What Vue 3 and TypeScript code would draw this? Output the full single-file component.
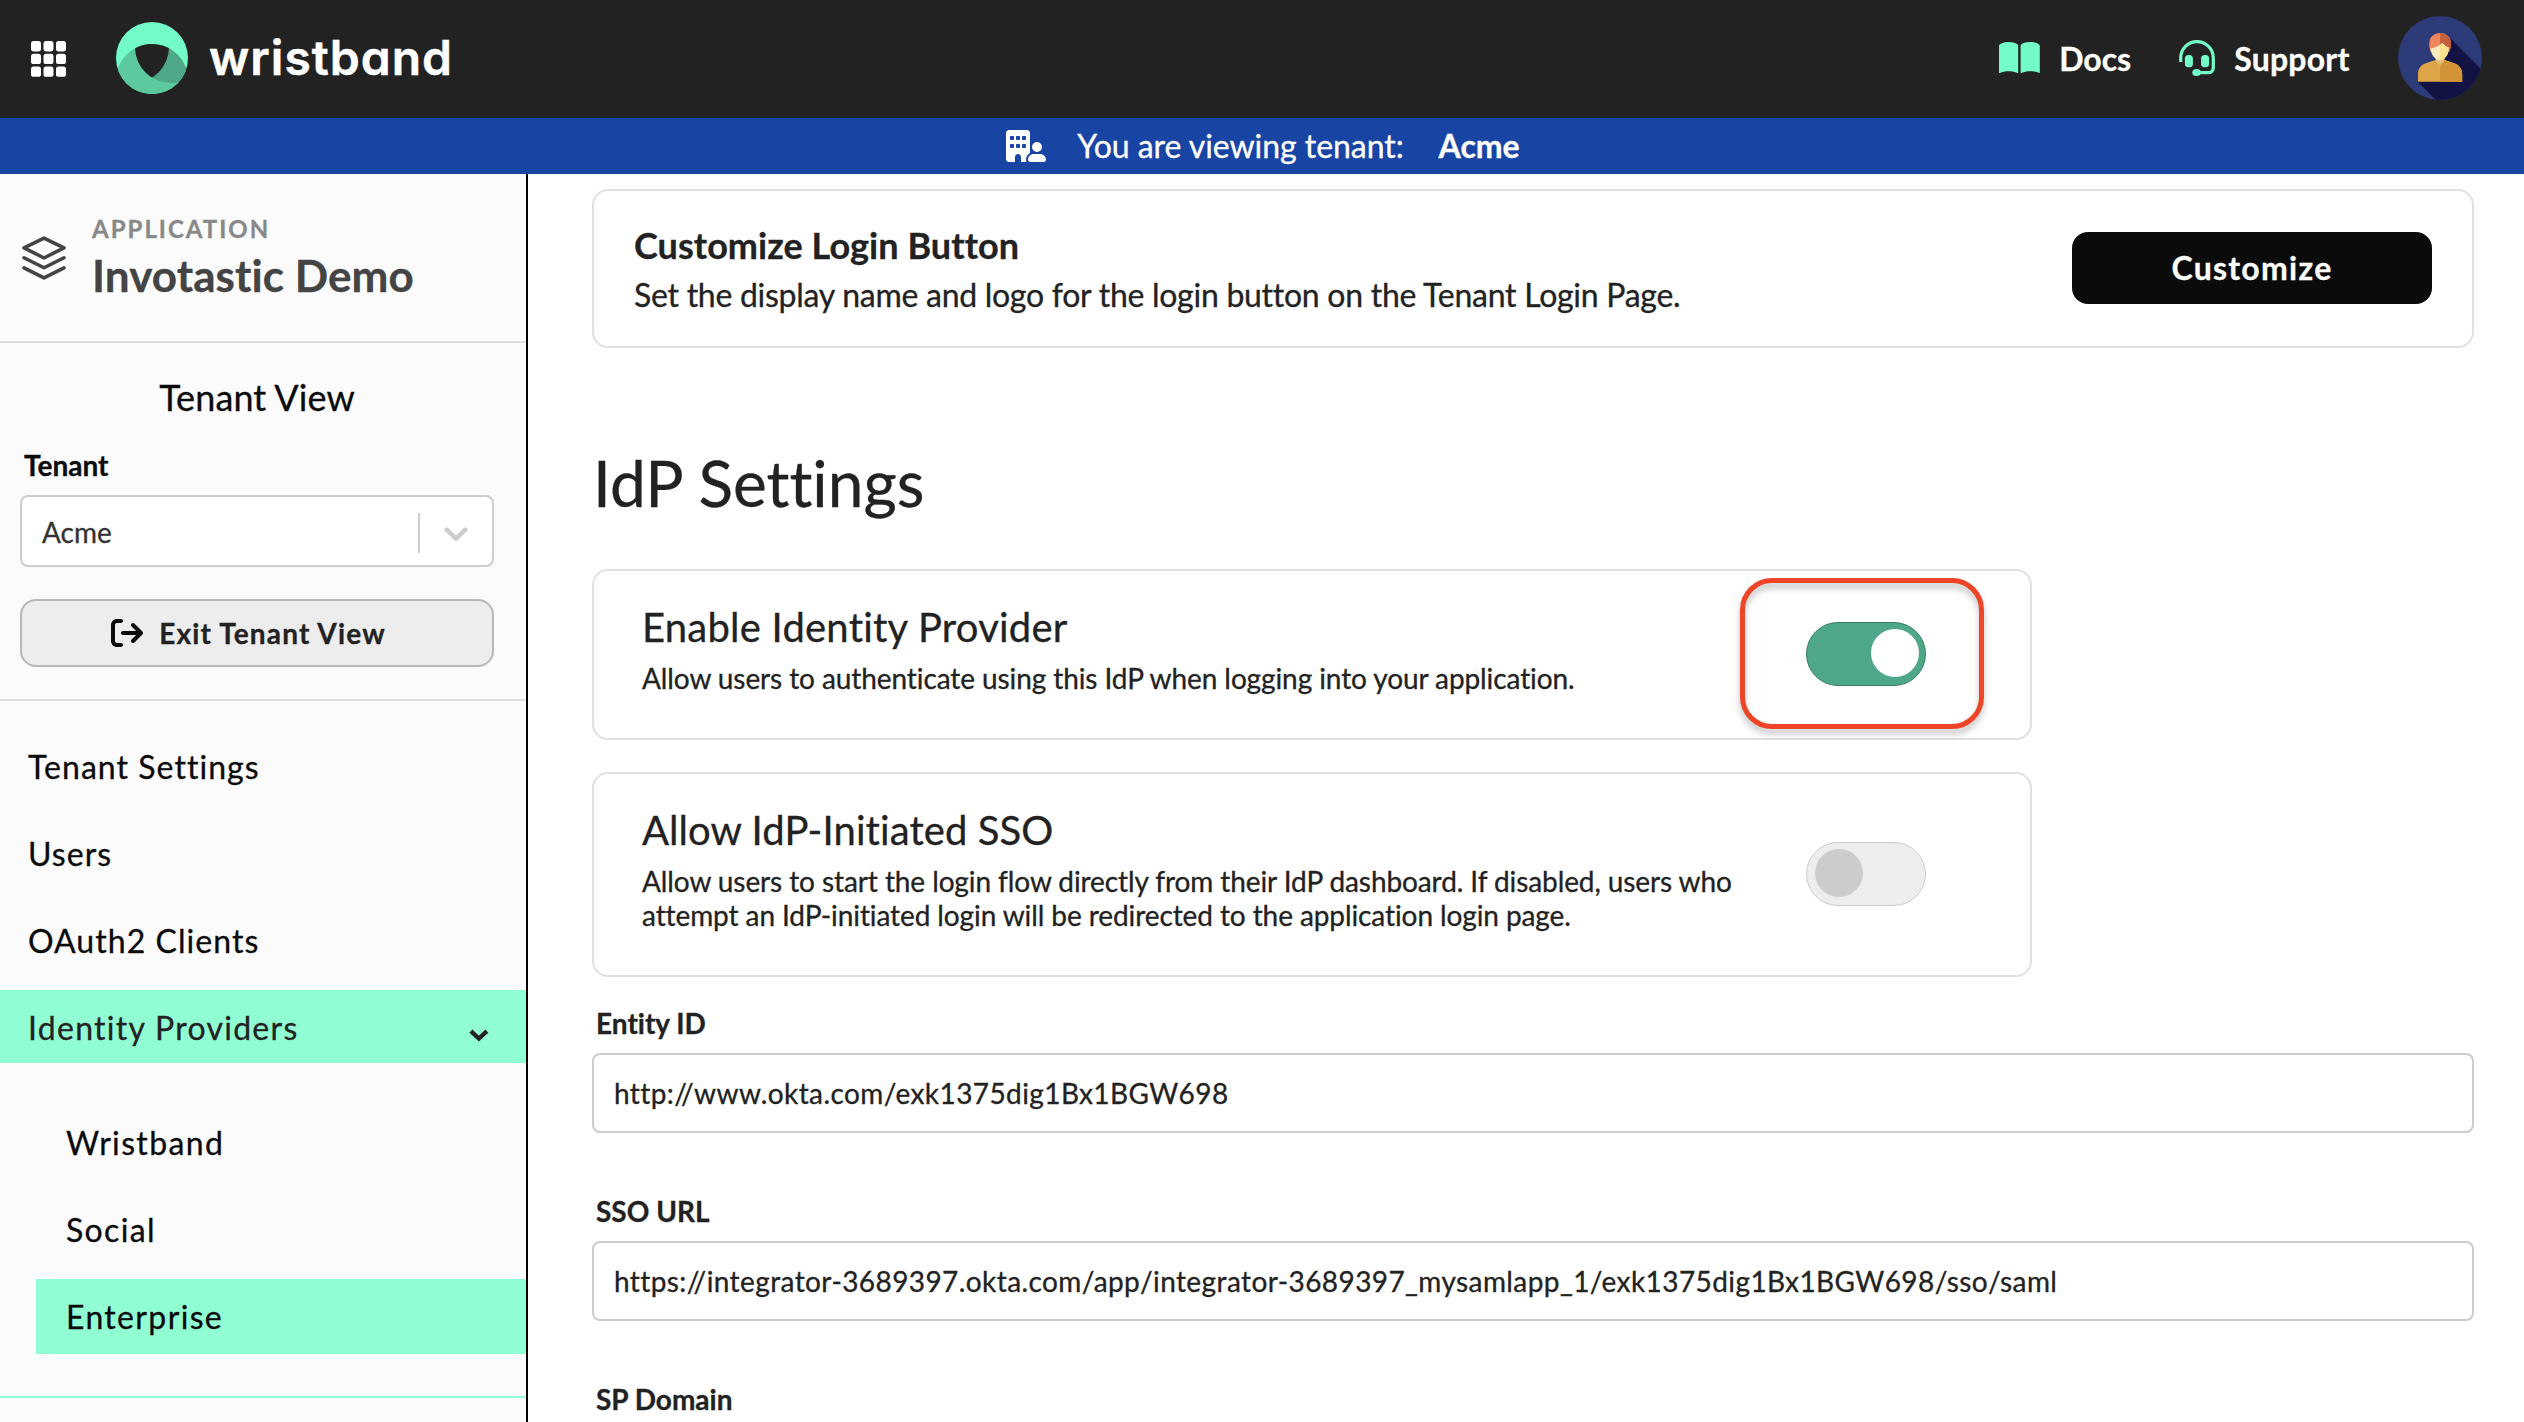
<script setup lang="ts">
import { ref } from 'vue'

interface NavItem { label: string; active?: boolean }
interface Field { label: string; value?: string }

const navItems: NavItem[] = [
  { label: 'Tenant Settings' },
  { label: 'Users' },
  { label: 'OAuth2 Clients' },
  { label: 'Identity Providers', active: true },
]
const subItems: NavItem[] = [
  { label: 'Wristband' },
  { label: 'Social' },
  { label: 'Enterprise', active: true },
]
const fields: Field[] = [
  { label: 'Entity ID', value: 'http://www.okta.com/exk1375dig1Bx1BGW698' },
  { label: 'SSO URL', value: 'https://integrator-3689397.okta.com/app/integrator-3689397_mysamlapp_1/exk1375dig1Bx1BGW698/sso/saml' },
  { label: 'SP Domain' },
]
const idpEnabled = ref(true)
const ssoAllowed = ref(false)
</script>

<template>
  <div class="page">
    <header class="topbar">
      <div class="brand">
        <svg class="apps" viewBox="0 0 35 36">
          <template v-for="r in 3" :key="r">
            <rect v-for="k in 3" :key="k" :x="(k - 1) * 12.5" :y="(r - 1) * 12.7" width="10" height="10.4" rx="2.6" fill="#fff" />
          </template>
        </svg>
        <svg class="logo" viewBox="0 0 72 72">
          <defs>
            <clipPath id="outer"><circle cx="36" cy="36" r="36" /></clipPath>
            <clipPath id="lower" clip-path="url(#outer)"><circle cx="36" cy="58" r="36" /></clipPath>
            <clipPath id="right" clip-path="url(#lower)"><circle cx="55" cy="25" r="36" /></clipPath>
          </defs>
          <circle cx="36" cy="36" r="36" fill="#74fcc8" />
          <circle cx="36" cy="58" r="36" fill="#5dc99e" clip-path="url(#outer)" />
          <circle cx="55" cy="25" r="36" fill="#4ea786" clip-path="url(#lower)" />
          <circle cx="17" cy="25" r="36" fill="#222" clip-path="url(#right)" />
        </svg>
        <span class="wordmark">wristband</span>
      </div>
      <nav class="links">
        <a class="link docs">
          <svg width="41" height="32" viewBox="0 0 41 32" fill="#74fcc8">
            <path d="M0 4.2Q0 3 1 2.3C3.4.6 6.4 0 9.8 0s6.200.7 8.600 2.300q.8.6.8 1.700V30.500q0 .8-.8.5C13.600 28.600 5.600 28.600.8 31q-.8.300-.8-.5z" />
            <path d="M21.600 4q0-1.100.8-1.700C24.800.7 27.600 0 31 0s6.400.6 8.800 2.300q1 .7 1 1.900V30.500q0 .8-.8.5c-4.800-2.400-12.800-2.400-17.600 0q-.8.300-.8-.5z" />
          </svg>
          <span>Docs</span>
        </a>
        <a class="link support">
          <svg width="36" height="36" viewBox="0 0 36 36">
            <path d="M1.700 22V18A16.300 16.300 0 0 1 34.300 18V28a4.700 4.700 0 0 1-4.700 4.700H18" fill="none" stroke="#74fcc8" stroke-width="3.200" />
            <rect x="5.900" y="15" width="8" height="12.300" rx="3.600" fill="#74fcc8" />
            <rect x="22.100" y="15" width="8" height="12.300" rx="3.600" fill="#74fcc8" />
            <ellipse cx="17.600" cy="32.500" rx="4.300" ry="3.500" fill="#74fcc8" />
          </svg>
          <span>Support</span>
        </a>
        <svg class="avatar" viewBox="0 0 84 84">
          <defs>
            <clipPath id="avatar-disc"><circle cx="42" cy="42" r="42" /></clipPath>
            <clipPath id="avatar-half"><rect x="42" y="0" width="42" height="84" /></clipPath>
          </defs>
          <circle cx="42" cy="42" r="42" fill="#2d3b78" />
          <path d="M52 22L92 62V92H46L20 66z" fill="#121243" clip-path="url(#avatar-disc)" />
          <path d="M20 65.700V58c0-6.500 4-10 10-11.500l7.500-2.500h9l7.500 2.500c6 1.500 10.200 5 10.200 11.500v7.700z" fill="#dfa549" />
          <path d="M42 44h4.500l7.500 2.500c6 1.500 10.200 5 10.200 11.500v7.700H42z" fill="#d39437" />
          <path d="M37.500 38h9v6.500L42 49.300l-4.500-4.800z" fill="#e0c078" />
          <path d="M31.200 28c0-7 4.600-11 10.800-11s11 4 11 11c0 3-.8 6-2 8H33c-1.300-2-1.800-5-1.800-8z" fill="#f0845b" />
          <path d="M42 17c6.200 0 11 4 11 11 0 3-.8 6-2 8h-9z" fill="#c4613d" />
          <path d="M32.500 32.500C37 31.500 41 30 44.500 27c1.500 2.200 3.500 3.600 6.200 4.500.5 6-3.700 12.800-8.700 12.800s-9.200-6-9.500-11.800z" fill="#fdebc0" />
          <path d="M32.500 32.500C37 31.500 41 30 44.500 27c1.500 2.200 3.500 3.600 6.200 4.500.5 6-3.700 12.800-8.700 12.800s-9.200-6-9.500-11.800z" fill="#fbe08f" clip-path="url(#avatar-half)" />
        </svg>
      </nav>
    </header>

    <div class="banner">
      <svg width="40" height="32" viewBox="0 0 640 512" fill="#fff">
        <path d="M48 0C21.500 0 0 21.500 0 48V464c0 26.500 21.500 48 48 48h96V432c0-26.500 21.500-48 48-48s48 21.500 48 48v80h89.900c-6.300-10.200-9.900-22.200-9.900-35.100c0-46.900 25.800-87.800 64-109.200V271.800 48c0-26.500-21.500-48-48-48H48zM64 240c0-8.800 7.200-16 16-16h32c8.800 0 16 7.200 16 16v32c0 8.800-7.200 16-16 16H80c-8.800 0-16-7.200-16-16V240zm112-16h32c8.800 0 16 7.200 16 16v32c0 8.800-7.200 16-16 16H176c-8.800 0-16-7.200-16-16V240c0-8.800 7.200-16 16-16zm80 16c0-8.800 7.200-16 16-16h32c8.800 0 16 7.200 16 16v32c0 8.800-7.200 16-16 16H272c-8.800 0-16-7.200-16-16V240zM80 96h32c8.800 0 16 7.200 16 16v32c0 8.800-7.200 16-16 16H80c-8.800 0-16-7.200-16-16V112c0-8.800 7.200-16 16-16zm80 16c0-8.800 7.200-16 16-16h32c8.800 0 16 7.200 16 16v32c0 8.800-7.200 16-16 16H176c-8.800 0-16-7.200-16-16V112zM272 96h32c8.800 0 16 7.200 16 16v32c0 8.800-7.200 16-16 16H272c-8.800 0-16-7.200-16-16V112c0-8.800 7.200-16 16-16zM576 272a80 80 0 1 0 -160 0 80 80 0 1 0 160 0zM352 477.100c0 19.300 15.600 34.900 34.900 34.900H605.100c19.300 0 34.900-15.600 34.900-34.900c0-51.400-41.700-93.100-93.100-93.100H445.100c-51.400 0-93.100 41.700-93.100 93.100z" />
      </svg>
      <span class="viewing">You are viewing tenant:</span>
      <strong>Acme</strong>
    </div>

    <div class="body">
      <aside class="sidebar">
        <section class="app">
          <svg class="layers" width="44" height="44" viewBox="0 0 44 44" fill="none" stroke="#444" stroke-width="3.500" stroke-linejoin="round" stroke-linecap="round">
            <path d="M22 2.100L42 11.900 22 22 2 11.900z" />
            <path d="M2 21.800l20 10 20-10" />
            <path d="M2 31.900l20 10 20-10" />
          </svg>
          <div class="app-text">
            <div class="app-kind">APPLICATION</div>
            <div class="app-name">Invotastic Demo</div>
          </div>
        </section>

        <section class="tenant">
          <div class="tenant-title">Tenant View</div>
          <label class="tenant-label">Tenant</label>
          <div class="select">
            <span class="select-value">Acme</span>
            <span class="select-sep"></span>
            <svg class="select-arrow" width="40" height="40" viewBox="0 0 20 20" fill="#ccc">
              <path d="M4.516 7.548c0.436-0.446 1.043-0.481 1.576 0l3.908 3.747 3.908-3.747c0.533-0.481 1.141-0.446 1.574 0 0.436 0.445 0.408 1.197 0 1.615-0.406 0.418-4.695 4.502-4.695 4.502-0.217 0.223-0.502 0.335-0.787 0.335s-0.570-0.112-0.789-0.335c0 0-4.287-4.084-4.695-4.502s-0.436-1.170 0-1.615z" />
            </svg>
          </div>
          <button class="exit">
            <svg width="32" height="32" viewBox="0 0 512 512" fill="#0b0b0b">
              <path d="M502.600 278.600c12.500-12.500 12.500-32.800 0-45.300l-128-128c-12.500-12.500-32.800-12.500-45.300 0s-12.500 32.800 0 45.300L402.700 224 192 224c-17.700 0-32 14.300-32 32s14.300 32 32 32l210.700 0-73.400 73.400c-12.500 12.500-12.500 32.800 0 45.300s32.800 12.500 45.300 0l128-128zM160 96c17.700 0 32-14.300 32-32s-14.300-32-32-32L96 32C43 32 0 75 0 128L0 384c0 53 43 96 96 96l64 0c17.700 0 32-14.300 32-32s-14.300-32-32-32l-64 0c-17.700 0-32-14.300-32-32l0-256c0-17.700 14.300-32 32-32l64 0z" />
            </svg>
            <span>Exit Tenant View</span>
          </button>
        </section>

        <nav class="nav">
          <a v-for="item in navItems" :key="item.label" class="nav-item" :class="{ active: item.active }">
            <span>{{ item.label }}</span>
            <svg v-if="item.active" class="nav-chevron" width="20" height="13" viewBox="0 0 20 13">
              <path d="M1.900 2.200l8 7.400 8-7.400" fill="none" stroke="#222" stroke-width="4.300" />
            </svg>
          </a>
        </nav>
        <nav class="subnav">
          <a v-for="item in subItems" :key="item.label" class="sub-item" :class="{ active: item.active }">{{ item.label }}</a>
        </nav>
      </aside>

      <main class="main">
        <section class="card customize">
          <div>
            <div class="customize-title">Customize Login Button</div>
            <div class="customize-desc">Set the display name and logo for the login button on the Tenant Login Page.</div>
          </div>
          <button class="primary">Customize</button>
        </section>

        <h1 class="heading">IdP Settings</h1>

        <section class="card setting">
          <div class="setting-text">
            <div class="setting-title enable">Enable Identity Provider</div>
            <div class="setting-desc">Allow users to authenticate using this IdP when logging into your application.</div>
          </div>
          <div class="toggle" :class="{ on: idpEnabled }" @click="idpEnabled = !idpEnabled"><span class="knob"></span></div>
          <div class="callout"></div>
        </section>

        <section class="card setting">
          <div class="setting-text">
            <div class="setting-title">Allow IdP-Initiated SSO</div>
            <div class="setting-desc">Allow users to start the login flow directly from their IdP dashboard. If disabled, users who<br />attempt an IdP-initiated login will be redirected to the application login page.</div>
          </div>
          <div class="toggle" :class="{ on: ssoAllowed }" @click="ssoAllowed = !ssoAllowed"><span class="knob"></span></div>
        </section>

        <div class="fields">
          <div v-for="field in fields" :key="field.label" class="field">
            <label class="field-label">{{ field.label }}</label>
            <div class="input">{{ field.value }}</div>
          </div>
        </div>
      </main>
    </div>
  </div>
</template>

<style>
body {
  margin: 0;
  background: #fff;
  overflow: hidden;
}
</style>

<style scoped>
.page {
  width: 2524px;
  height: 1422px;
  display: flex;
  flex-direction: column;
  overflow: hidden;
  font-family: Lato, 'Liberation Sans', sans-serif;
  font-variant-ligatures: none;
  -webkit-text-stroke: 0.3px;
  color: #222;
}
.page * { box-sizing: border-box; }
svg { display: block; flex: none; }
button { font-family: inherit; margin: 0; }

.topbar {
  flex: none;
  height: 118px;
  padding: 0 42px 0 31px;
  display: flex;
  align-items: center;
  justify-content: space-between;
  background: #222;
  color: #fff;
}
.brand { display: flex; align-items: center; }
.apps { width: 35px; height: 36px; margin-right: 50px; }
.logo { width: 72px; height: 72px; margin: -2px 21px 0 0; }
.wordmark {
  margin-top: -3px;
  font: 600 48px/48px Inter, sans-serif;
  font-feature-settings: 'cv11';
  letter-spacing: 1px;
  -webkit-text-stroke: 0.5px;
}
.links { display: flex; align-items: center; font-size: 32px; font-weight: 700; line-height: 38px; }
.link { display: flex; align-items: center; gap: 19px; }
.docs svg { margin-top: -3px; }
.docs { margin-right: 48px; }
.support { letter-spacing: 0.2px; }
.support svg { margin-top: -2px; }
.avatar { width: 84px; height: 84px; margin: -2px 0 0 48.5px; }

.banner {
  flex: none;
  height: 56px;
  padding-left: 2px;
  display: flex;
  align-items: center;
  justify-content: center;
  gap: 32px;
  background: #1845a4;
  color: #fff;
  font-size: 32px;
  line-height: 38px;
}
.viewing { margin: 0 3px 0 -1px; letter-spacing: -0.05px; }

.body { flex: 1; min-height: 0; display: flex; }
.sidebar {
  flex: none;
  width: 528px;
  border-right: 2px solid #000;
  background: #fbfbfb;
}
.app {
  height: 169px;
  padding: 40px 0 0 22px;
  display: flex;
  border-bottom: 2px solid #ddd;
}
.layers { margin: 22px 26px 0 0; }
.app-kind { font-size: 24px; font-weight: 700; line-height: 29px; letter-spacing: 2px; color: #888; }
.app-name { margin-top: 6px; font-size: 44px; font-weight: 700; line-height: 53px; letter-spacing: 0.08px; color: #444; }

.tenant { padding: 32px 32px 32px 20px; border-bottom: 2px solid #ddd; color: #0b0b0b; }
.tenant-title { font-size: 36px; line-height: 44px; text-align: center; letter-spacing: 0.1px; }
.tenant-label { display: block; margin: 29px 0 13px 4px; font-size: 28px; font-weight: 700; line-height: 34px; }
.select {
  height: 72px;
  display: flex;
  align-items: center;
  padding: 2px 16px 0 20px;
  border: 2px solid #ccc;
  border-radius: 8px;
  background: #fff;
}
.select-value { flex: 1; font-size: 28px; line-height: 34px; color: #333; }
.select-sep { width: 2px; height: 40px; margin: 2px 16px 0 0; background: #ccc; }
.select-arrow { margin-top: 1px; }
.exit {
  width: 100%;
  height: 68px;
  margin-top: 32px;
  padding: 0 17px 0 0;
  display: flex;
  align-items: center;
  justify-content: center;
  gap: 16px;
  border: 2px solid #b8b8b8;
  border-radius: 16px;
  background: #ededed;
  color: #222;
  font-size: 28px;
  font-weight: 700;
  line-height: 34px;
  letter-spacing: 1.15px;
}

.nav { padding-top: 28px; display: flex; flex-direction: column; gap: 14px; }
.nav-item {
  height: 73px;
  padding: 2px 37px 0 28px;
  display: flex;
  align-items: center;
  justify-content: space-between;
  font-size: 32px;
  letter-spacing: 1.05px;
  color: #0b0b0b;
}
.nav-item.active { background: #90fdd3; color: #222; letter-spacing: 1.28px; }
.nav-chevron { margin-top: 15px; }
.subnav {
  padding: 42px 0 42px 36px;
  display: flex;
  flex-direction: column;
  gap: 12px;
  border-bottom: 2px solid #90fdd3;
}
.sub-item {
  height: 75px;
  padding-left: 30px;
  font-size: 32px;
  line-height: 75px;
  letter-spacing: 1.35px;
  color: #0b0b0b;
}
.sub-item.active { background: #90fdd3; }

.main { flex: 1; min-width: 0; padding: 15px 50px 0 64px; }
.card { display: flex; align-items: center; justify-content: space-between; border: 2px solid #e0e0e0; border-radius: 16px; background: #fff; }
.customize { height: 159px; padding: 0 40px 0 40px; }
.customize-title { font-size: 36px; font-weight: 700; line-height: 43px; letter-spacing: 0.05px; }
.customize-desc { margin-top: 9px; font-size: 32px; line-height: 38px; letter-spacing: -0.27px; }
.primary {
  width: 360px;
  height: 72px;
  margin-bottom: 1px;
  padding: 0 0 2px;
  border: 0;
  border-radius: 16px;
  background: #0b0b0b;
  color: #fff;
  font-size: 32px;
  font-weight: 700;
  letter-spacing: 1.27px;
}
.heading { margin: 96px 0 48px 1px; font-size: 64px; font-weight: 400; line-height: 77px; }
.setting {
  position: relative;
  width: 1440px;
  margin-bottom: 32px;
  padding: 32px 104px 43px 48px;
}
.setting-title { font-size: 40px; line-height: 48px; letter-spacing: 0.08px; }
.setting-title.enable { letter-spacing: 0.23px; }
.setting-desc { margin-top: 10px; font-size: 28px; line-height: 34px; white-space: nowrap; letter-spacing: -0.09px; }
.toggle {
  flex: none;
  width: 120px;
  height: 64px;
  margin-bottom: -10px;
  padding: 6px 8px 0;
  display: flex;
  border: 1px solid #ccc;
  border-radius: 32px;
  background: #ededed;
}
.knob { width: 48px; height: 48px; border-radius: 50%; background: #ccc; }
.toggle.on { padding-right: 6px; justify-content: flex-end; border-color: #37805f; background: #4ea786; }
.toggle.on .knob { background: #fff; }
.callout {
  position: absolute;
  left: 1146px;
  top: 7px;
  width: 244px;
  height: 151px;
  border: 5px solid #ee4427;
  border-radius: 32px;
  filter: drop-shadow(0 5px 3px rgba(0, 0, 0, 0.25));
  pointer-events: none;
}

.fields { margin-top: -3px; }
.field { margin-bottom: 61px; }
.field-label { display: block; margin: 0 0 13px 4px; font-size: 28px; font-weight: 700; line-height: 34px; }
.input {
  height: 80px;
  padding-left: 20px;
  border: 2px solid #ccc;
  border-radius: 8px;
  font-size: 28px;
  line-height: 76px;
  letter-spacing: 0.41px;
}
</style>
